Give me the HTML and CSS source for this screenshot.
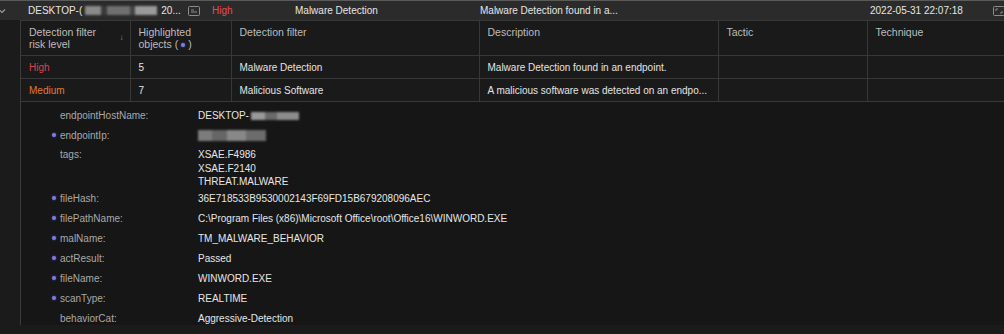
FILE: index.html
```
<!DOCTYPE html>
<html lang="en">
<head>
  <meta charset="UTF-8">
  <title>Detection details</title>
  <link rel="stylesheet" href="styles.css">
</head>
<body>
  <div class="topbar">
    <span class="chev">
      <svg width="8" height="6" viewBox="0 0 8 6"><path d="M1 1.5 L4 4.5 L7 1.5" fill="none" stroke="#9a9a9a" stroke-width="1.2"/></svg>
    </span>
    <span class="tb-host">DESKTOP-(<span class="blur b-host"></span>20...</span>
    <span class="tb-icon">
      <svg width="12" height="10" viewBox="0 0 12 10"><rect x="0.5" y="0.5" width="11" height="9" rx="1" fill="none" stroke="#8c8c8c"/><path d="M3 4 H6 M3 6 H9" stroke="#8c8c8c"/></svg>
    </span>
    <span class="sev-high">High</span>
    <span>Malware Detection</span>
    <span>Malware Detection found in a...</span>
    <span>2022-05-31 22:07:18</span>
    <span class="tb-icon">
      <svg width="12" height="10" viewBox="0 0 12 10"><rect x="0.5" y="0.5" width="11" height="9" rx="1" fill="none" stroke="#8c8c8c"/><path d="M3 3 H5 M3 3 V5 M9 7 H7 M9 7 V5" stroke="#8c8c8c"/></svg>
    </span>
  </div>

  <div class="expand">
    <table class="filters">
      <colgroup>
        <col style="width: 109px">
        <col style="width: 101px">
        <col style="width: 248px">
        <col style="width: 239px">
        <col style="width: 149px">
        <col style="width: 137px">
      </colgroup>
      <thead>
        <tr>
          <th><div class="sortable"><span>Detection filter<br>risk level</span><span class="sort">&#8595;</span></div></th>
          <th>Highlighted<br>objects (<span class="dot"></span>)</th>
          <th>Detection filter</th>
          <th>Description</th>
          <th>Tactic</th>
          <th>Technique</th>
        </tr>
      </thead>
      <tbody>
        <tr>
          <td class="risk-high">High</td>
          <td>5</td>
          <td>Malware Detection</td>
          <td>Malware Detection found in an endpoint.</td>
          <td></td>
          <td></td>
        </tr>
        <tr>
          <td class="risk-medium">Medium</td>
          <td>7</td>
          <td>Malicious Software</td>
          <td>A malicious software was detected on an endpo...</td>
          <td></td>
          <td></td>
        </tr>
      </tbody>
    </table>

    <div class="objects">
      <div class="kv"><span></span><span class="key">endpointHostName:</span><span class="val">DESKTOP-<span class="blur b-name"></span></span></div>
      <div class="kv"><span class="dot"></span><span class="key">endpointIp:</span><span class="val"><span class="blur b-ip"></span></span></div>
      <div class="kv tags"><span></span><span class="key">tags:</span><span class="val">XSAE.F4986<br>XSAE.F2140<br>THREAT.MALWARE</span></div>
      <div class="kv"><span class="dot"></span><span class="key">fileHash:</span><span class="val">36E718533B9530002143F69FD15B679208096AEC</span></div>
      <div class="kv"><span class="dot"></span><span class="key">filePathName:</span><span class="val">C:\Program Files (x86)\Microsoft Office\root\Office16\WINWORD.EXE</span></div>
      <div class="kv"><span class="dot"></span><span class="key">malName:</span><span class="val">TM_MALWARE_BEHAVIOR</span></div>
      <div class="kv"><span class="dot"></span><span class="key">actResult:</span><span class="val">Passed</span></div>
      <div class="kv"><span class="dot"></span><span class="key">fileName:</span><span class="val">WINWORD.EXE</span></div>
      <div class="kv"><span class="dot"></span><span class="key">scanType:</span><span class="val">REALTIME</span></div>
      <div class="kv"><span></span><span class="key">behaviorCat:</span><span class="val">Aggressive-Detection</span></div>
    </div>
  </div>
</body>
</html>
```

FILE: styles.css
```
body {
  margin: 0;
  background-color: #1b1b1b;
  font-family: "Liberation Sans", Arial, sans-serif;
  font-size: 10px;
  color: #e2e2e2;
  overflow: hidden;
}
.topbar {
  display: grid;
  grid-template-columns: 28px 160px 24px 83px 185px 390px 123px 1fr;
  align-items: center;
  height: 19px;
  background-color: #2b2b2b;
  border-top: 1px solid #5a5a5a;
  color: #e6e6e6;
  white-space: nowrap;
}
.chev {
  display: flex;
  margin-left: -2px;
}
.tb-host {
  display: flex;
  align-items: center;
}
.tb-icon {
  display: flex;
  align-items: center;
}
.sev-high {
  color: #e24d5a;
}
.blur {
  display: inline-block;
  filter: blur(1.2px);
}
.b-host {
  width: 72px;
  height: 9px;
  margin: 0 4px 0 3px;
  background: linear-gradient(90deg, #8a8a8a 0 22%, #3a3a3a 22% 30%, #6f6f6f 30% 62%, #444 62% 70%, #9a9a9a 70% 100%);
}
.b-name {
  width: 48px;
  height: 8px;
  margin-left: 2px;
  vertical-align: -1px;
  background: linear-gradient(90deg, #999 0 30%, #6a6a6a 30% 55%, #8c8c8c 55% 100%);
}
.b-ip {
  width: 68px;
  height: 11px;
  vertical-align: -2px;
  background: linear-gradient(90deg, #7c7c7c 0 20%, #666 20% 42%, #888 42% 70%, #6c6c6c 70% 100%);
}

.expand {
  margin-left: 20px;
  border-left: 1px solid #3c3c3c;
  background-color: #161616;
  height: 305px;
}
.filters {
  border-collapse: collapse;
  table-layout: fixed;
  width: 983px;
  background-color: #1a1a1a;
}
.filters th,
.filters td {
  border: 1px solid #383838;
  padding: 0 8px;
  text-align: left;
  white-space: nowrap;
  overflow: hidden;
}
.filters tr > :first-child {
  border-left: none;
}
.filters th {
  height: 35px;
  padding-top: 5px;
  vertical-align: top;
  font-weight: normal;
  font-size: 10.5px;
  line-height: 12px;
  color: #bdbdbd;
  box-sizing: border-box;
}
.filters td {
  height: 22px;
  color: #e4e4e4;
}
.sortable {
  display: flex;
  align-items: center;
  justify-content: space-between;
}
.sort {
  color: #8a8a8a;
  font-size: 8px;
  margin-right: -2px;
}
.filters .risk-high {
  color: #d9444f;
}
.filters .risk-medium {
  color: #e07a36;
}
.dot {
  display: inline-block;
  width: 4px;
  height: 4px;
  border-radius: 50%;
  background-color: #7c7ce6;
  box-shadow: 0 0 2px #5c5cc8;
  vertical-align: 1px;
}
th .dot {
  margin: 0 3px;
}

.objects {
  padding-top: 3px;
}
.kv {
  display: grid;
  grid-template-columns: 39px 138px 1fr;
  align-items: center;
  height: 20px;
}
.kv .dot {
  justify-self: end;
  margin-right: 4px;
}
.kv.tags {
  height: 43px;
  align-items: start;
  padding-top: 3px;
  box-sizing: border-box;
  line-height: 13.5px;
}
.key {
  color: #a9a9a9;
}
.val {
  color: #e6e6e6;
  white-space: nowrap;
}
```
